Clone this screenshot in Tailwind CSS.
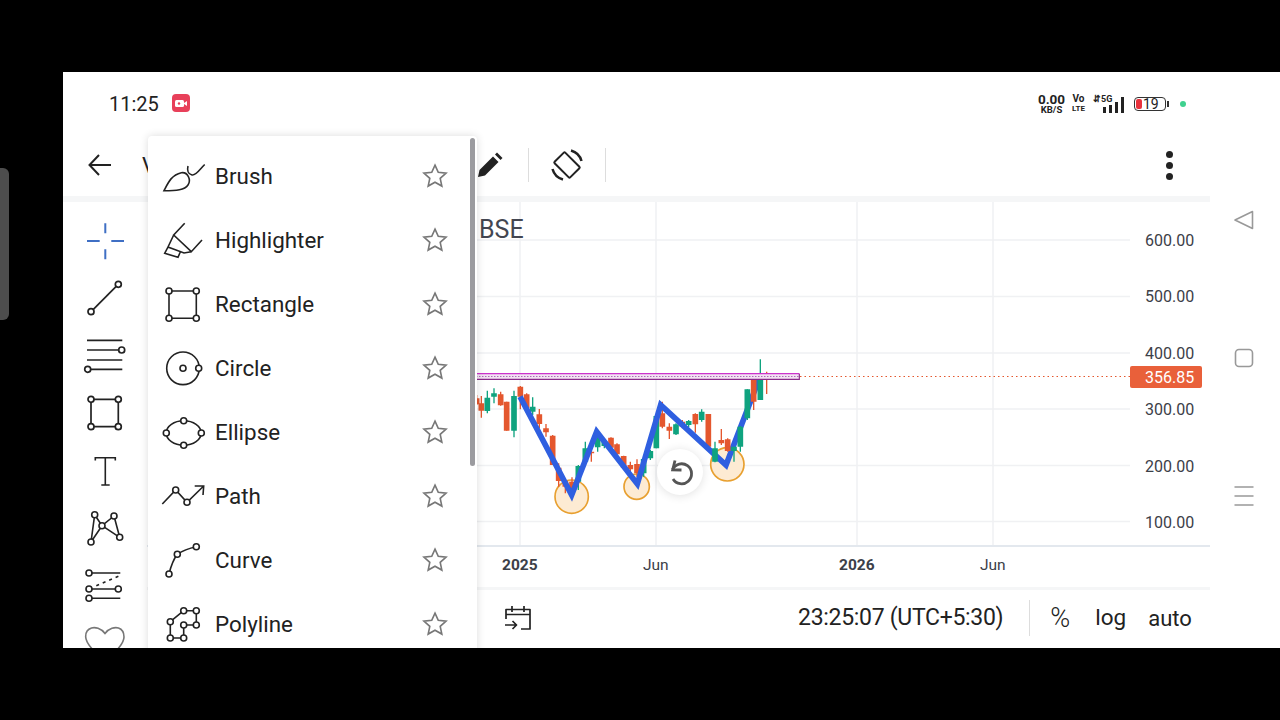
<!DOCTYPE html>
<html><head><meta charset="utf-8"><script src="https://cdn.jsdelivr.net/npm/@tailwindcss/browser@4"></script></head>
<body class="bg-black w-[1280px] h-[720px] overflow-hidden relative font-['Roboto',sans-serif]">
<div class="absolute left-0 top-[168px] w-[9px] h-[152px] bg-[#4d4d4d] rounded-r-md"></div>
<div class="h-[72px]"></div>
<main class="relative ml-[63px] h-[576px] w-[1217px] bg-white flex flex-col overflow-hidden">
  <!-- status bar -->
  <div class="h-[64px] flex items-center pl-[46px] pr-[94px] shrink-0">
    <span class="text-[20px] text-[#222] w-[63px]">11:25</span>
    <span class="w-[18px] h-[18px] mb-[2px] rounded-[4px] bg-[#e8405a] flex items-center justify-center"><svg width="12" height="9" viewBox="0 0 12 9"><rect x="0" y="1" width="9" height="7" rx="1.5" fill="#fff"/><path d="M9 4l3-2v5l-3-2z" fill="#fff"/><circle cx="4" cy="4.5" r="1.2" fill="#e8405a"/></svg></span>
    <div class="ml-auto flex items-center text-[#222] mb-[1px]">
      <div class="flex flex-col items-center w-[29px] font-bold"><span class="text-[13.500px] leading-[11px]">0.00</span><span class="text-[9.500px] leading-[9px]">KB/S</span></div>
      <div class="flex flex-col items-center ml-[6px] w-[13px] font-bold"><span class="leading-[10px] text-[10px]">Vo</span><span class="leading-[9px] text-[8px]">LTE</span></div>
      <div class="relative ml-[7px] w-[34px] h-[20px]">
        <span class="absolute left-[1px] top-[-1px] text-[9px] font-bold leading-[12px]">⇵5G</span>
        <svg class="absolute left-0 top-0" width="34" height="20" viewBox="0 0 34 20"><path d="M11 13h3v6h-3zM17 11h3v8h-3zM23 8h3v11h-3zM29 3h3v16h-3z" fill="#222"/></svg>
      </div>
      <div class="relative ml-[8px] w-[36px] h-[16px] flex items-center">
        <div class="w-[32px] h-[14px] border border-[#333] rounded-[4px] p-[1px] relative"><div class="w-[6px] h-full bg-[#e8323c] rounded-[2px]"></div><span class="absolute left-[8px] top-[-1px] text-[14px] leading-[14px] text-[#222]">19</span></div>
        <div class="w-[2px] h-[6px] bg-[#333] ml-[1px]"></div>
      </div>
      <div class="ml-[10px] w-[6px] h-[6px] rounded-full bg-[#3fd18f]"></div>
    </div>
  </div>
  <!-- top toolbar -->
  <div class="h-[60px] flex items-center shrink-0 w-[1147px] relative pb-[2px]">
    <svg class="ml-[22px]" width="30" height="30" viewBox="0 0 30 30" fill="none" stroke="#222" stroke-width="2"><path d="M26 15H5M14 5L4.500 15L14 25"/></svg>
    <span class="ml-[27px] text-[22px] text-[#222] w-[300px]">V</span>
    <svg class="ml-[33px]" width="30" height="30" viewBox="0 0 30 30"><path d="M3 27l1.500-7L18 6.500l5.500 5.500L10 25.500z" fill="#222"/><path d="M20 4.500l2-2 5.500 5.500-2 2z" fill="#222"/></svg>
    <div class="ml-[23px] w-px h-[34px] bg-[#ddd]"></div>
    <svg class="ml-[22px]" width="32" height="32" viewBox="0 0 32 32" fill="none" stroke="#222" stroke-width="2"><rect x="8.500" y="5" width="15" height="22" rx="1" transform="rotate(-45 16 16)"/><path d="M20 1.500A15 15 0 0 1 30.500 12M12 30.500A15 15 0 0 1 1.500 20" stroke-width="2.500"/></svg>
    <div class="ml-[22px] w-px h-[34px] bg-[#ddd]"></div>
    <div class="ml-auto mr-[37px] flex flex-col gap-[4px]"><i class="block w-[7px] h-[7px] rounded-full bg-[#222]"></i><i class="block w-[7px] h-[7px] rounded-full bg-[#222]"></i><i class="block w-[7px] h-[7px] rounded-full bg-[#222]"></i></div>
  </div>
  <div class="h-[6px] w-[1147px] bg-[#f5f6f7] shrink-0"></div>
  <!-- body -->
  <div class="flex-1 flex w-[1147px] min-h-0">
    <div class="w-[84px] shrink-0 flex flex-col items-center pt-[15px] overflow-hidden text-[#222]">
      <svg class="shrink-0 mb-[9.400px]" width="48" height="48" viewBox="0 0 48 48" stroke="#3f6fc4" stroke-width="2" fill="none"><path d="M24.300 6.300v10M24.300 32.300v10M6 24h12.700M30.300 24H43"/></svg>
      <svg class="shrink-0 mb-[9.400px]" width="48" height="48" viewBox="0 0 48 48" stroke="#222" stroke-width="1.700" fill="none"><path d="M12.100 35.600L35.200 12.400"/><circle cx="10" cy="37.700" r="3"/><circle cx="37.300" cy="10.300" r="3"/></svg>
      <svg class="shrink-0 mb-[9.400px]" width="48" height="48" viewBox="0 0 48 48" stroke="#222" stroke-width="1.700" fill="none"><path d="M6 8.300h35.300M6 18h31.700M6 28h35.300M9.700 37.300h31.600"/><circle cx="40.700" cy="18" r="3"/><circle cx="6.700" cy="37.300" r="3"/></svg>
      <svg class="shrink-0 mb-[9.400px]" width="48" height="48" viewBox="0 0 48 48" stroke="#222" stroke-width="1.700" fill="none"><path d="M10 10.300h27.300v27.400H10z"/><g fill="#fff"><circle cx="10" cy="10.300" r="3"/><circle cx="37.300" cy="10.300" r="3"/><circle cx="10" cy="37.700" r="3"/><circle cx="37.300" cy="37.700" r="3"/></g></svg>
      <svg class="shrink-0 mb-[9.400px]" width="48" height="48" viewBox="0 0 48 48" stroke="#222" stroke-width="1.600" fill="none"><path d="M14.300 13.500v-2.800h20v2.800M24.300 10.700V38M20.300 38h8.400"/></svg>
      <svg class="shrink-0 mb-[9.400px]" width="48" height="48" viewBox="0 0 48 48" stroke="#222" stroke-width="1.600" fill="#fff"><path d="M13.700 10.700L10 38M10 38L21 21.700M13.700 10.700L21 21.700M21 21.700L33 12M33 12L38.700 33.300M21 21.700L38.700 33.300" fill="none"/><circle cx="13.700" cy="10.700" r="3"/><circle cx="33" cy="12" r="3"/><circle cx="21" cy="21.700" r="3"/><circle cx="10" cy="38" r="3"/><circle cx="38.700" cy="33.300" r="3"/></svg>
      <svg class="shrink-0 mb-[6.500px]" width="48" height="48" viewBox="0 0 48 48" stroke="#222" stroke-width="1.600" fill="none"><path d="M11 12h28.300M11 28h23.300M11 37.300h28.300"/><path d="M15.300 24.700L38.700 14.700" stroke-dasharray="3 4"/><circle cx="8" cy="12" r="3"/><circle cx="8" cy="28" r="3"/><circle cx="37.300" cy="28" r="3"/><circle cx="8" cy="37.300" r="3"/></svg>
      <svg class="shrink-0" width="48" height="48" viewBox="0 0 48 48" stroke="#777" stroke-width="1.600" fill="none"><path d="M24 17.500C20 12 14 11 10.500 12C6 13.500 4.500 17 4.700 21C5 28 15 38 24 44C33 38 43 28 43 21C43 17 42 13.500 37.500 12C34 11 28 12 24 17.500Z"/></svg>
    </div>
    <div class="flex-1 flex flex-col min-w-0">
      <div class="h-[343px] relative shrink-0">
        <svg class="absolute left-0 top-0" width="1063" height="343" viewBox="147 202 1063 343" fill="none">
          <path d="M476 240H1130M476 296.500H1130M476 353H1130M476 409H1130M476 465.500H1130M476 521.500H1130M520 202V546M656 202V546M857 202V546M993 202V546" stroke="#f0f1f3" stroke-width="1.500"/>
          <path d="M800 376.500H1130" stroke="#e4572e" stroke-dasharray="1.500 3"/>
          <g transform="translate(470 340) scale(.33333)">
            <g fill="#fdebd3" stroke="#e8a030" stroke-width="5"><circle cx="305" cy="470" r="50"/><circle cx="500" cy="440" r="38"/><circle cx="772" cy="373" r="50"/></g>
            <path d="M20 165V195M34 168V233M92 155V197M110 185V272M151 138V208M170 160V210M208 207V265M228 252V290M248 285V375M266 370V440M286 415V460M306 412V470M364 330V365M423 292V335M441 310V345M461 347V385M481 365V395M501 358V410M577 185V265M598 250V297M637 240V265M676 220V278M715 222V325" stroke="#e4572e" stroke-width="4"/>
            <path d="M20 175V193M34 190V212M92 163V196M110 185V272M151 140V170M170 163V205M208 223V252M228 265V277M248 287V375M266 383V423M286 422V440M306 425V460M364 335V340M423 293V323M441 313V343M461 348V383M481 375V388M501 372V400M577 220V260M598 260V272M637 245V260M676 222V253M715 222V320" stroke="#e4572e" stroke-width="17"/>
            <path d="M52 152V220M72 145V190M132 152V292M188 172V225M325 375V450M346 305V365M383 275V335M403 300V325M521 355V410M541 330V360M559 225V325M618 250V285M656 240V262M695 208V245" stroke="#0fa37f" stroke-width="4"/>
            <path d="M52 173V213M72 160V170M132 168V272M188 200V215M325 378V425M346 325V365M383 292V322M403 303V318M521 357V400M541 333V355M559 228V325M618 253V283M656 243V255M695 215V240" stroke="#0fa37f" stroke-width="17"/>
            <path d="M150 170L305 465L380 275L502 432L572 195L768 375L870 110" stroke="#2f5fe0" stroke-width="17" stroke-linejoin="miter"/>
            <path d="M754 267V315M773 295V335M851 118V210M890 95V162" stroke="#e4572e" stroke-width="4"/>
            <path d="M754 300V310M773 298V333M851 118V185" stroke="#e4572e" stroke-width="17"/>
            <path d="M735 305V367M792 320V365M811 258V335M832 148V240M871 58V180" stroke="#0fa37f" stroke-width="4"/>
            <path d="M735 325V365M792 320V333M811 260V320M832 148V235M871 110V180" stroke="#0fa37f" stroke-width="17"/>
            <rect x="19" y="101" width="969" height="17" fill="#f3e3f3"/>
            <path d="M19 101H988" stroke="#cc33cc" stroke-width="3.500"/>
            <path d="M19 118H988V101" stroke="#8a2a8a" stroke-width="3.500"/>
            <path d="M19 109.500H988" stroke="#8a2a9a" stroke-width="3" stroke-dasharray="3 6"/>
          </g>
        </svg>
        <span class="absolute left-[332px] top-[13px] text-[25px] leading-[30px] text-[#434651]">BSE</span>
        <!-- price scale -->
        <div class="absolute left-[998px] top-[25px] flex flex-col text-[16px] leading-[28px] text-[#3c4048] gap-[28.400px]">
          <span>600.00</span><span>500.00</span><span>400.00</span><span>300.00</span><span>200.00</span><span>100.00</span>
        </div>
        <div class="absolute left-[983px] top-[164px] w-[72px] h-[22px] bg-[#e9603a] rounded-[2px] text-[16px] leading-[23px] text-[#fff] pl-[15px]">356.85</div>
        <div class="absolute left-[510px] top-[247px] w-[46px] h-[46px] rounded-full bg-white shadow-[0_1px_10px_rgba(0,0,0,0.12)] flex items-center justify-center">
          <svg width="28" height="28" viewBox="0 0 28 28" fill="none" stroke="#555" stroke-width="2.800"><path d="M6.500 11.500A10 10 0 1 1 7 21"/><path d="M9 2.500L6.700 11.800L15.500 12"/></svg>
        </div>
      </div>
      <div class="h-[42px] border-t-2 border-[#e3e8ee] shrink-0 relative text-[15.500px] text-[#3c4048]">
        <span class="absolute left-[355px] top-[7px] font-bold">2025</span>
        <span class="absolute left-[496px] top-[7px]">Jun</span>
        <span class="absolute left-[692px] top-[7px] font-bold">2026</span>
        <span class="absolute left-[833px] top-[7px]">Jun</span>
      </div>
      <div class="h-[3px] bg-[#f5f6f7] shrink-0"></div>
      <div class="flex-1 flex items-center text-[22px] text-[#222] relative pl-[356px] pb-[2px]">
        <svg width="30" height="30" viewBox="0 0 30 30" fill="none" stroke="#222" stroke-width="1.700" stroke-linejoin="round"><path d="M3 16V6.500h24V26h-9M3 11.500h24M9 3v6M21 3v6M2 22h11M9.500 18l4 4-4 4"/></svg>
        <span class="ml-[265px] text-[23px] tracking-[-0.3px]">23:25:07 (UTC+5:30)</span>
        <div class="ml-[26px] w-px h-[36px] bg-[#ddd]"></div>
        <span class="ml-[20px] text-[27px] font-light leading-[30px]">%</span>
        <span class="ml-[25px] text-[22.500px]">log</span>
        <span class="ml-[22px]">auto</span>
      </div>
    </div>
  </div>
  <!-- drawing tools menu -->
  <div class="absolute left-[85px] top-[64px] w-[329px] h-[520px] bg-white rounded-t-[4px] shadow-[0_0_8px_rgba(0,0,0,0.14)] pt-[8px] overflow-hidden text-[22.400px] text-[#222]">
    <div class="absolute right-[2px] top-[2px] w-[5px] h-[328px] rounded-full bg-[#9b9b9f]"></div>
    <div class="h-[64px] flex items-center pl-[12px]"><svg class="shrink-0" width="48" height="48" viewBox="0 0 48 48" fill="none" stroke="#222" stroke-width="1.600"><path d="M4 38.700C8 31 11.300 23 21.300 20.700C28 19.700 31.300 28 28 33C24.700 38 16.300 38.700 4 38.700Z"/><path d="M28 14C27 18 28 22 32 23C36 24 40 17 44.700 12.500"/></svg><span class="ml-[7px] pt-[1px] flex-1">Brush</span><svg class="mr-[29px]" width="26" height="26" viewBox="0 0 24 24" fill="none" stroke="#777" stroke-width="1.500"><path d="M12 2l3 6.600 7.200.8-5.400 4.800 1.500 7.100L12 17.700l-6.300 3.600 1.500-7.100L1.800 9.400 9 8.600z"/></svg></div>
    <div class="h-[64px] flex items-center pl-[12px]"><svg class="shrink-0" width="48" height="48" viewBox="0 0 48 48" fill="none" stroke="#222" stroke-width="1.600"><path d="M24.700 7.300L13.700 19L31.300 35.700L42 24M13.700 19L8 31L24 37L31.300 35.700M8 31L4.700 37.300L18 41.300L20.500 35.500"/></svg><span class="ml-[7px] pt-[1px] flex-1">Highlighter</span><svg class="mr-[29px]" width="26" height="26" viewBox="0 0 24 24" fill="none" stroke="#777" stroke-width="1.500"><path d="M12 2l3 6.600 7.200.8-5.400 4.800 1.500 7.100L12 17.700l-6.300 3.600 1.500-7.100L1.800 9.400 9 8.600z"/></svg></div>
    <div class="h-[64px] flex items-center pl-[12px]"><svg class="shrink-0" width="48" height="48" viewBox="0 0 48 48" fill="none" stroke="#222" stroke-width="1.600"><path d="M9 11h27.300v27.300H9z"/><g fill="#fff"><circle cx="9" cy="11" r="3"/><circle cx="36.300" cy="11" r="3"/><circle cx="9" cy="38.300" r="3"/><circle cx="36.300" cy="38.300" r="3"/></g></svg><span class="ml-[7px] pt-[1px] flex-1">Rectangle</span><svg class="mr-[29px]" width="26" height="26" viewBox="0 0 24 24" fill="none" stroke="#777" stroke-width="1.500"><path d="M12 2l3 6.600 7.200.8-5.400 4.800 1.500 7.100L12 17.700l-6.300 3.600 1.500-7.100L1.800 9.400 9 8.600z"/></svg></div>
    <div class="h-[64px] flex items-center pl-[12px]"><svg class="shrink-0" width="48" height="48" viewBox="0 0 48 48" fill="none" stroke="#222" stroke-width="1.600"><circle cx="23" cy="24.300" r="16.300"/><circle cx="23" cy="24.300" r="3"/><circle cx="38.700" cy="24.300" r="3" fill="#fff"/></svg><span class="ml-[7px] pt-[1px] flex-1">Circle</span><svg class="mr-[29px]" width="26" height="26" viewBox="0 0 24 24" fill="none" stroke="#777" stroke-width="1.500"><path d="M12 2l3 6.600 7.200.8-5.400 4.800 1.500 7.100L12 17.700l-6.300 3.600 1.500-7.100L1.800 9.400 9 8.600z"/></svg></div>
    <div class="h-[64px] flex items-center pl-[12px]"><svg class="shrink-0" width="48" height="48" viewBox="0 0 48 48" fill="none" stroke="#222" stroke-width="1.600"><ellipse cx="23.700" cy="25" rx="17.500" ry="12.300"/><g fill="#fff"><circle cx="23.700" cy="12.700" r="3"/><circle cx="23.700" cy="37.300" r="3"/><circle cx="6.300" cy="25" r="3"/><circle cx="41.300" cy="25" r="3"/></g></svg><span class="ml-[7px] pt-[1px] flex-1">Ellipse</span><svg class="mr-[29px]" width="26" height="26" viewBox="0 0 24 24" fill="none" stroke="#777" stroke-width="1.500"><path d="M12 2l3 6.600 7.200.8-5.400 4.800 1.500 7.100L12 17.700l-6.300 3.600 1.500-7.100L1.800 9.400 9 8.600z"/></svg></div>
    <div class="h-[64px] flex items-center pl-[12px]"><svg class="shrink-0" width="48" height="48" viewBox="0 0 48 48" fill="none" stroke="#222" stroke-width="1.600"><path d="M2.300 32L15.700 18L27 30.300L43.700 14M34.700 14H43.700L43 23"/><g fill="#fff"><circle cx="15.700" cy="18" r="3"/><circle cx="27" cy="30.300" r="3"/></g></svg><span class="ml-[7px] pt-[1px] flex-1">Path</span><svg class="mr-[29px]" width="26" height="26" viewBox="0 0 24 24" fill="none" stroke="#777" stroke-width="1.500"><path d="M12 2l3 6.600 7.200.8-5.400 4.800 1.500 7.100L12 17.700l-6.300 3.600 1.500-7.100L1.800 9.400 9 8.600z"/></svg></div>
    <div class="h-[64px] flex items-center pl-[12px]"><svg class="shrink-0" width="48" height="48" viewBox="0 0 48 48" fill="none" stroke="#222" stroke-width="1.600"><path d="M9 38C11 30 13 24 17.300 18.300C22 15 30 12 36.300 10.700"/><g fill="#fff"><circle cx="9" cy="38" r="3"/><circle cx="17.300" cy="18.300" r="3"/><circle cx="36.300" cy="10.700" r="3"/></g></svg><span class="ml-[7px] pt-[1px] flex-1">Curve</span><svg class="mr-[29px]" width="26" height="26" viewBox="0 0 24 24" fill="none" stroke="#777" stroke-width="1.500"><path d="M12 2l3 6.600 7.200.8-5.400 4.800 1.500 7.100L12 17.700l-6.300 3.600 1.500-7.100L1.800 9.400 9 8.600z"/></svg></div>
    <div class="h-[64px] flex items-center pl-[12px] shrink-0"><svg class="shrink-0" width="48" height="48" viewBox="0 0 48 48" fill="none" stroke="#222" stroke-width="1.600"><path d="M23.700 10.700L10.300 21.700V38H23.700V25H36.300V10.700Z"/><g fill="#fff"><circle cx="23.700" cy="10.700" r="3"/><circle cx="36.300" cy="10.700" r="3"/><circle cx="10.300" cy="21.700" r="3"/><circle cx="23.700" cy="25" r="3"/><circle cx="36.300" cy="25" r="3"/><circle cx="10.300" cy="38" r="3"/><circle cx="23.700" cy="38" r="3"/></g></svg><span class="ml-[7px] pt-[1px] flex-1">Polyline</span><svg class="mr-[29px]" width="26" height="26" viewBox="0 0 24 24" fill="none" stroke="#777" stroke-width="1.500"><path d="M12 2l3 6.600 7.200.8-5.400 4.800 1.500 7.100L12 17.700l-6.300 3.600 1.500-7.100L1.800 9.400 9 8.600z"/></svg></div>
  </div>
  <!-- system navigation -->
  <div class="absolute left-[1147px] top-[137px] w-[68px] h-[298px] flex flex-col items-center justify-between">
    <svg width="22" height="22" viewBox="0 0 22 22" fill="none" stroke="#999" stroke-width="1.600" stroke-linejoin="round"><path d="M19.500 2.500V19.500L2 11Z"/></svg>
    <svg width="22" height="22" viewBox="0 0 22 22" fill="none" stroke="#999" stroke-width="1.600"><rect x="2.500" y="2.500" width="17" height="17" rx="3.500"/></svg>
    <svg width="22" height="22" viewBox="0 0 22 22" fill="none" stroke="#999" stroke-width="1.500"><path d="M1.500 2h19M1.500 11h19M1.500 20h19"/></svg>
  </div>
</main>
</body></html>
